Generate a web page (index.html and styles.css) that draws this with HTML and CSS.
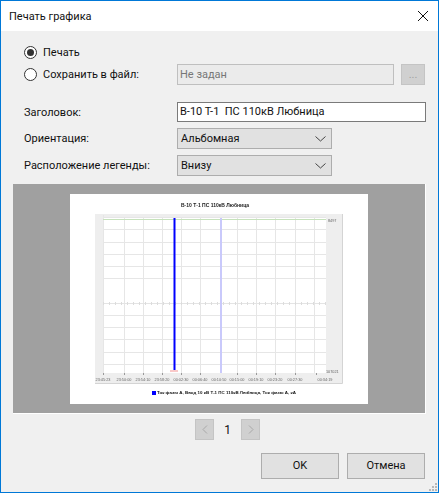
FILE: index.html
```html
<!DOCTYPE html>
<html lang="ru">
<head>
    <meta charset="UTF-8">
    <meta name="viewport" content="width=device-width, initial-scale=1.0">
    <title>Печать графика</title>
    <link rel="stylesheet" href="styles.css">
</head>
<body>
    <div class="window">
        <div class="titlebar">
            <span class="title">Печать графика</span>
            <svg class="close" width="12" height="12" viewBox="0 0 12 12">
                <path d="M1 1L11 11M11 1L1 11" stroke="#111" stroke-width="1" fill="none"/>
            </svg>
        </div>

        <div class="content">
            <div class="radio-row first">
                <span class="radio checked"></span>
                <span>Печать</span>
            </div>
            <div class="radio-row second">
                <span class="radio"></span>
                <span class="radio-label">Сохранить в файл:</span>
                <div class="file-input">Не задан</div>
                <div class="browse">...</div>
            </div>

            <div class="form-row title-row">
                <label>Заголовок:</label>
                <div class="text-input">В-10 Т-1&nbsp; ПС 110кВ Любница</div>
            </div>
            <div class="form-row select-row">
                <label>Ориентация:</label>
                <div class="select"><span>Альбомная</span><svg width="11" height="6" viewBox="0 0 11 6"><path d="M0.5 0.5L5.5 5L10.5 0.5" stroke="#444" fill="none"/></svg></div>
            </div>
            <div class="form-row select-row">
                <label>Расположение легенды:</label>
                <div class="select"><span>Внизу</span><svg width="11" height="6" viewBox="0 0 11 6"><path d="M0.5 0.5L5.5 5L10.5 0.5" stroke="#444" fill="none"/></svg></div>
            </div>

            <div class="preview">
                <div class="page">
                    <svg class="chart" width="298" height="210" viewBox="0 0 298 210">
                        <rect x="25" y="20" width="248" height="169" fill="#eeeeee"/>
                        <path d="M272.5 20V189.5H25" stroke="#d4d4d4" fill="none"/>
                        <rect x="33" y="23" width="223" height="156" fill="#fff"/>
                        <path class="grid" d="M33 23.5H256M33 35.5H256M33 48.5H256M33 60.5H256M33 72.5H256M33 84.5H256M33 121.5H256M33 133.5H256M33 145.5H256M33 158.5H256M33 170.5H256"/>
                        <path class="grid" d="M33.5 21V179M54.5 24V179M73.5 24V179M92.5 24V179M111.5 24V179M130.5 24V179M167.5 24V179M186.5 24V179M205.5 24V179M225.5 24V179M244.5 24V179"/>
                        <path d="M33.5 179v2M54.5 179v2M73.5 179v2M92.5 179v2M111.5 179v2M130.5 179v2M167.5 179v2M186.5 179v2M205.5 179v2M225.5 179v2M246.5 179v2" stroke="#999"/>
                        <path d="M33 25.5H256" stroke="#c6e2bb"/>
                        <path d="M33 109.5H256" stroke="#e4e4e4"/>
                        <path d="M33 109.5H256" stroke="#dcdcdc" stroke-width="3" stroke-dasharray="1 5"/>
                        <path d="M151 24V179" stroke="#c9c9fb" stroke-width="2"/>
                        <path d="M104.5 24V176" stroke="#0000ff" stroke-width="2"/>
                        <rect x="100" y="176" width="8" height="2" fill="#f9c9c9"/>
                        <text class="title-text" x="145" y="13">В-10 Т-1 ПС 110кВ Любница</text>
                        <text class="tick" x="258" y="28">8497</text>
                        <text class="tick" x="256" y="179">107021</text>
                        <g class="axis">
                            <text x="33" y="187">23:45:23</text>
                            <text x="54" y="187">23:50:00</text>
                            <text x="73" y="187">23:54:10</text>
                            <text x="92" y="187">23:58:20</text>
                            <text x="111" y="187">00:02:30</text>
                            <text x="130" y="187">00:06:40</text>
                            <text x="149" y="187">00:10:50</text>
                            <text x="167" y="187">00:15:00</text>
                            <text x="186" y="187">00:19:10</text>
                            <text x="205" y="187">00:23:20</text>
                            <text x="225" y="187">00:27:30</text>
                            <text x="255" y="187">00:34:19</text>
                        </g>
                        <rect x="82" y="197" width="4" height="4" fill="#0000ff"/>
                        <text class="legend" x="87" y="200" textLength="139" lengthAdjust="spacingAndGlyphs">Ток фазы А, Ввод 10 кВ Т-1 ПС 110кВ Любница, Ток фазы А, кА</text>
                    </svg>
                </div>
            </div>

            <div class="pager">
                <div class="page-btn"><svg width="6" height="9" viewBox="0 0 6 9"><path d="M5 0.5L1 4.5L5 8.5" stroke="#a8a8a8" fill="none"/></svg></div>
                <span class="page-num">1</span>
                <div class="page-btn"><svg width="6" height="9" viewBox="0 0 6 9"><path d="M1 0.5L5 4.5L1 8.5" stroke="#a8a8a8" fill="none"/></svg></div>
            </div>

            <div class="actions">
                <div class="btn">OK</div>
                <div class="btn">Отмена</div>
            </div>

            <svg class="grip" width="9" height="9" viewBox="0 0 9 9">
                <path d="M6 0h2v2H6zM3 3h2v2H3zM6 3h2v2H6zM0 6h2v2H0zM3 6h2v2H3zM6 6h2v2H6z" fill="#b8b8b8"/>
            </svg>
        </div>
    </div>
</body>
</html>
```

FILE: styles.css
```css
html, body {
    margin: 0;
    padding: 0;
}

body {
    width: 439px;
    height: 493px;
    overflow: hidden;
    font-family: Roboto, Arial, sans-serif;
    font-size: 11px;
    color: #111;
}

.window {
    box-sizing: border-box;
    width: 439px;
    height: 493px;
    border: 1px solid #0078d7;
    background: #f0f0f0;
    display: flex;
    flex-direction: column;
}

.titlebar {
    height: 30px;
    background: #fff;
    display: flex;
    align-items: center;
    justify-content: space-between;
    padding: 0 9px 0 8px;
    flex-shrink: 0;
}

.content {
    flex: 1;
    padding: 0 12px;
    position: relative;
}

.grip {
    position: absolute;
    right: 0;
    bottom: 0;
}

.radio-row {
    display: flex;
    align-items: center;
    height: 21px;
    padding-left: 11px;
}

.radio-row.first {
    margin-top: 11px;
}

.radio-row.second {
    margin-top: 1px;
}

.radio {
    box-sizing: border-box;
    width: 13px;
    height: 13px;
    border: 1px solid #333;
    border-radius: 50%;
    background: #fff;
    margin-right: 6px;
    display: flex;
    align-items: center;
    justify-content: center;
    flex-shrink: 0;
}

.radio.checked::after {
    content: "";
    width: 7px;
    height: 7px;
    border-radius: 50%;
    background: #333;
}

.radio-label {
    width: 134px;
}

.file-input {
    box-sizing: border-box;
    width: 217px;
    height: 21px;
    border: 1px solid #bfbfbf;
    background: #ebebeb;
    color: #777;
    padding-left: 2px;
    line-height: 19px;
}

.browse {
    box-sizing: border-box;
    width: 24px;
    height: 21px;
    margin-left: 7px;
    background: #d0d0d0;
    border: 1px solid #c4c4c4;
    color: #a0a0a0;
    text-align: center;
    line-height: 19px;
}

.form-row {
    display: flex;
    align-items: center;
    padding-left: 11px;
}

.form-row label {
    width: 153px;
    flex-shrink: 0;
}

.title-row {
    margin-top: 17px;
    height: 20px;
}

.text-input {
    box-sizing: border-box;
    width: 249px;
    height: 20px;
    background: #fff;
    border: 1px solid #7a7a7a;
    padding-left: 2px;
    line-height: 18px;
}

.select-row {
    margin-top: 6px;
    height: 21px;
}

.select {
    box-sizing: border-box;
    width: 155px;
    height: 21px;
    background: #e1e1e1;
    border: 1px solid #adadad;
    display: flex;
    align-items: center;
    justify-content: space-between;
    padding: 0 5px 0 3px;
}

.preview {
    box-sizing: border-box;
    width: 413px;
    height: 230px;
    margin-top: 8px;
    background: #a0a0a0;
    border-right: 1px solid #fff;
    border-bottom: 1px solid #fff;
    padding: 10px 0 0 57px;
}

.page {
    width: 298px;
    height: 210px;
    background: #fff;
}

.chart {
    display: block;
}

.grid {
    stroke: #e6e6e6;
    fill: none;
}

.chart text {
    font-family: "Liberation Sans", Arial, sans-serif;
    filter: blur(0.25px);
}

.title-text {
    font-size: 5px;
    font-weight: bold;
    text-anchor: middle;
    fill: #222;
}

.tick {
    font-size: 3.8px;
    fill: #666;
}

.axis text {
    font-size: 3.85px;
    fill: #666;
    text-anchor: middle;
}

.legend {
    font-size: 4.4px;
    font-weight: bold;
    fill: #111;
}

.pager {
    display: flex;
    align-items: center;
    margin: 5px 0 0 182px;
    height: 21px;
}

.page-btn {
    box-sizing: border-box;
    width: 19px;
    height: 21px;
    background: #d0d0d0;
    border: 1px solid #c4c4c4;
    display: flex;
    align-items: center;
    justify-content: center;
}

.page-num {
    width: 27px;
    text-align: center;
    font-size: 12px;
}

.actions {
    display: flex;
    justify-content: flex-end;
    gap: 8px;
    margin-top: 13px;
    padding-right: 1px;
}

.btn {
    box-sizing: border-box;
    width: 78px;
    height: 26px;
    background: #e1e1e1;
    border: 1px solid #adadad;
    text-align: center;
    line-height: 24px;
}
```
